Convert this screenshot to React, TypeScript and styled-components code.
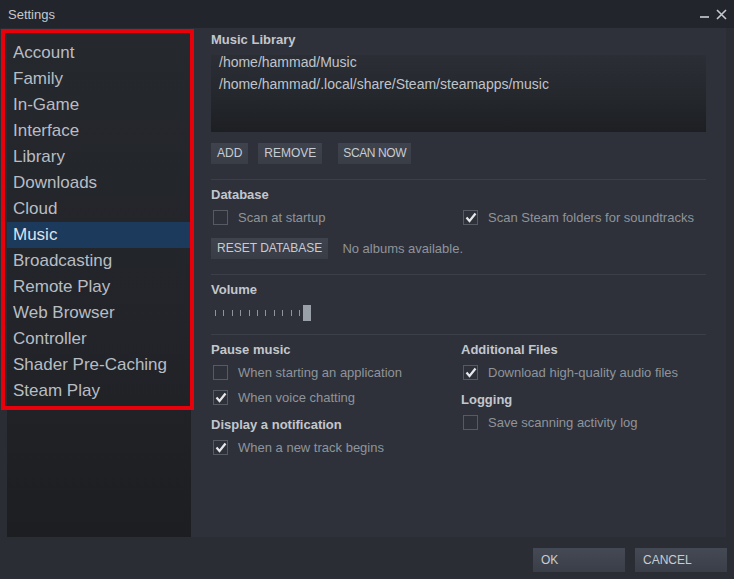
import styled, { createGlobalStyle } from "styled-components"

const GlobalStyle = createGlobalStyle`
  html, body {
    margin: 0;
    padding: 0;
    background: #2a2d33;
  }
  body {
    font-family: "Liberation Sans", Arial, sans-serif;
  }
`

const Window = styled('div')`
  position: relative;
  width: 734px;
  height: 579px;
  background: #2a2d33;
  display: flex;
  flex-direction: column;
  overflow: hidden;
`

const TitleBar = styled('div')`
  height: 28px;
  display: flex;
  align-items: center;
  justify-content: space-between;
  padding: 0 8px;
  background: #22252b;
  color: #c5c8cd;
  font-size: 13px;
`

const WindowControls = styled('div')`
  display: flex;
  align-items: center;
  gap: 7px;
  margin-right: -1px;
`

const Body = styled('div')`
  flex: 1;
  display: flex;
  padding-left: 7px;
  padding-right: 8px;
`

const Sidebar = styled('div')`
  width: 184px;
  margin-top: 6px;
  padding-top: 6px;
  background: linear-gradient(180deg, #25282d 0%, #222429 60%, #1c1e21 100%);
`

const NavItem = styled('div')<{ $active?: boolean }>`
  height: 26px;
  line-height: 26px;
  padding-left: 6px;
  font-size: 17px;
  color: ${p => (p.$active ? "#dfe3e8" : "#b8bdc4")};
  background: ${p => (p.$active ? "#1b3a5c" : "transparent")};
`

const Panel = styled('div')`
  flex: 1;
  background: #2e3139;
  padding: 4px 20px 0 20px;
`

const SectionTitle = styled('div')`
  font-size: 13px;
  font-weight: bold;
  color: #c3c7cd;
  line-height: 16px;
`

const PathBox = styled('div')`
  margin-top: 7px;
  height: 77px;
  background: linear-gradient(180deg, #2b2e35 0%, #24272c 55%, #1d1f23 100%);
  padding: 0 8px;
  display: flex;
  flex-direction: column;
  gap: 8px;
`

const PathLine = styled('div')`
  font-size: 14px;
  color: #c0c4ca;
  line-height: 14px;
`

const ButtonRow = styled('div')<{ $gap: number; $top: number }>`
  display: flex;
  align-items: center;
  gap: ${p => p.$gap}px;
  margin-top: ${p => p.$top}px;
`

const FlatButton = styled('div')<{ $tight?: boolean; $shift?: number }>`
  height: 21px;
  line-height: 21px;
  padding: 0 ${p => (p.$tight ? 5 : 6)}px;
  margin-left: ${p => p.$shift ?? 0}px;
  letter-spacing: ${p => (p.$tight ? "-0.4px" : "0")};
  background: linear-gradient(180deg, #3e434d 0%, #393d46 100%);
  color: #c8ccd2;
  font-size: 12px;
`

const Separator = styled('div')<{ $top: number }>`
  height: 1px;
  background: #3b3f48;
  margin-top: ${p => p.$top}px;
  margin-bottom: 7px;
`

const Row = styled('div')`
  display: flex;
`

const Column = styled('div')<{ $width?: number }>`
  width: ${p => (p.$width ? `${p.$width}px` : "auto")};
  display: flex;
  flex-direction: column;
`

const CheckRow = styled('div')<{ $top: number }>`
  display: flex;
  align-items: center;
  height: 16px;
  margin-top: ${p => p.$top}px;
  padding-left: 2px;
`

const Box = styled('div')`
  width: 13px;
  height: 13px;
  border: 1px solid #555a63;
  display: flex;
  align-items: center;
  justify-content: center;
  margin-right: 10px;
`

const CheckLabel = styled('span')`
  font-size: 13px;
  color: #8f949c;
`

const Note = styled('span')`
  font-size: 13px;
  color: #8f949c;
`

const Slider = styled('div')`
  display: flex;
  align-items: center;
  height: 16px;
  margin-top: 7px;
  padding-left: 4px;
`

const Tick = styled('div')`
  width: 1px;
  height: 6px;
  background: #8f949c;
  margin-right: 7.4px;
`

const Thumb = styled('div')`
  width: 8px;
  height: 16px;
  margin-left: -4px;
  background: #9aa0a8;
`

const Footer = styled('div')`
  height: 42px;
  display: flex;
  justify-content: flex-end;
  align-items: center;
  gap: 10px;
  padding: 4px 7px 0 0;
  box-sizing: border-box;
`

const DialogButton = styled('div')`
  width: 84px;
  height: 24px;
  line-height: 24px;
  padding-left: 8px;
  background: linear-gradient(180deg, #444a55 0%, #3a3e47 100%);
  color: #c8ccd2;
  font-size: 12px;
`

const Highlight = styled('div')`
  position: absolute;
  left: 1px;
  top: 29px;
  width: 185px;
  height: 373px;
  border: 4px solid #e8000b;
  pointer-events: none;
`

const nav = [
  "Account", "Family", "In-Game", "Interface", "Library", "Downloads", "Cloud",
  "Music", "Broadcasting", "Remote Play", "Web Browser", "Controller",
  "Shader Pre-Caching", "Steam Play",
]

function Check({ checked, label, top }: { checked?: boolean; label: string; top: number }) {
  return (
    <CheckRow $top={top}>
      <Box>
        {checked && (
          <svg width="12" height="11" viewBox="0 0 12 11">
            <path d="M1.5 5.5 L4.5 9 L10.5 1.5" fill="none" stroke="#e6e8eb" strokeWidth="2.2" />
          </svg>
        )}
      </Box>
      <CheckLabel>{label}</CheckLabel>
    </CheckRow>
  )
}

export default function App() {
  return (
    <>
      <GlobalStyle />
      <Window>
        <TitleBar>
          <span>Settings</span>
          <WindowControls>
            <svg width="9" height="10" viewBox="0 0 9 10">
              <rect x="0" y="7" width="9" height="2" fill="#a9adb3" />
            </svg>
            <svg width="11" height="11" viewBox="0 0 11 11">
              <path d="M1 1 L10 10 M10 1 L1 10" stroke="#c5c8cd" strokeWidth="1.6" />
            </svg>
          </WindowControls>
        </TitleBar>
        <Body>
          <Sidebar>
            {nav.map(n => (
              <NavItem key={n} $active={n === "Music"}>{n}</NavItem>
            ))}
          </Sidebar>
          <Panel>
            <SectionTitle>Music Library</SectionTitle>
            <PathBox>
              <PathLine>/home/hammad/Music</PathLine>
              <PathLine>/home/hammad/.local/share/Steam/steamapps/music</PathLine>
            </PathBox>
            <ButtonRow $gap={10} $top={11}>
              <FlatButton>ADD</FlatButton>
              <FlatButton>REMOVE</FlatButton>
              <FlatButton $tight $shift={6}>SCAN NOW</FlatButton>
            </ButtonRow>
            <Separator $top={15} />
            <SectionTitle>Database</SectionTitle>
            <Row>
              <Column $width={250}>
                <Check label="Scan at startup" top={6} />
              </Column>
              <Column>
                <Check checked label="Scan Steam folders for soundtracks" top={6} />
              </Column>
            </Row>
            <ButtonRow $gap={14} $top={13}>
              <FlatButton>RESET DATABASE</FlatButton>
              <Note>No albums available.</Note>
            </ButtonRow>
            <Separator $top={15} />
            <SectionTitle>Volume</SectionTitle>
            <Slider>
              {Array.from({ length: 11 }).map((_, i) => (
                <Tick key={i} />
              ))}
              <Thumb />
            </Slider>
            <Separator $top={13} />
            <Row>
              <Column $width={250}>
                <SectionTitle>Pause music</SectionTitle>
                <Check label="When starting an application" top={6} />
                <Check checked label="When voice chatting" top={9} />
                <SectionTitle style={{ marginTop: 12 }}>Display a notification</SectionTitle>
                <Check checked label="When a new track begins" top={6} />
              </Column>
              <Column>
                <SectionTitle>Additional Files</SectionTitle>
                <Check checked label="Download high-quality audio files" top={6} />
                <SectionTitle style={{ marginTop: 12 }}>Logging</SectionTitle>
                <Check label="Save scanning activity log" top={6} />
              </Column>
            </Row>
          </Panel>
        </Body>
        <Footer>
          <DialogButton>OK</DialogButton>
          <DialogButton>CANCEL</DialogButton>
        </Footer>
        <Highlight />
      </Window>
    </>
  )
}
